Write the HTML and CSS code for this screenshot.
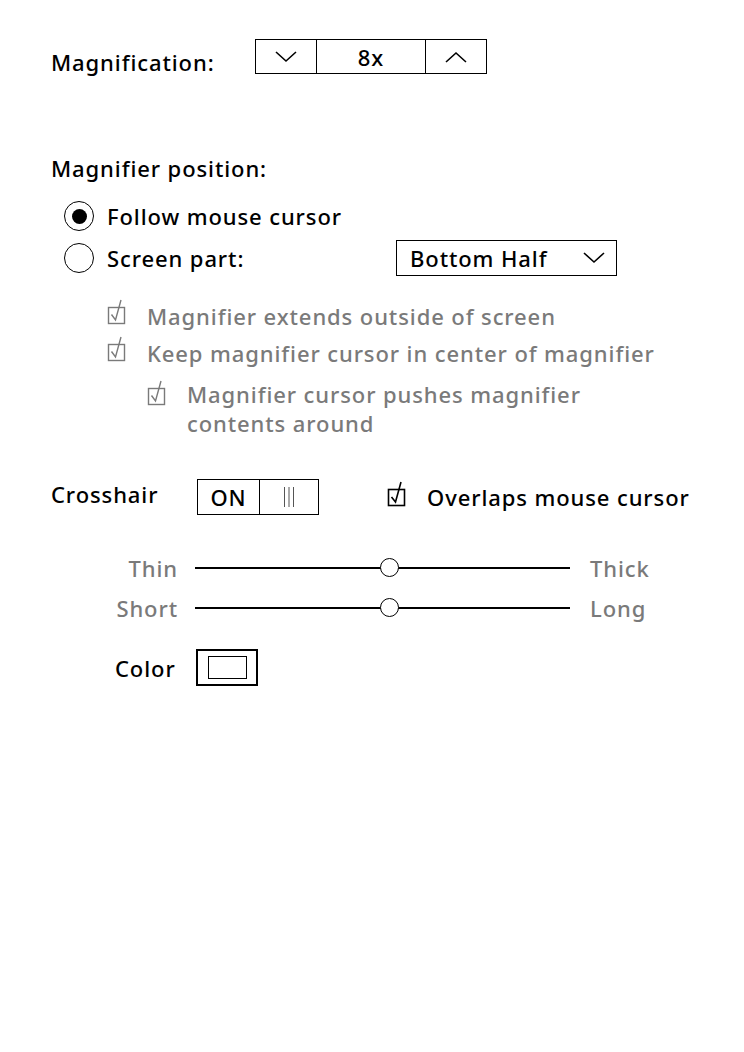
FILE: index.html
```html
<!DOCTYPE html>
<html>
<head>
<meta charset="utf-8">
<link rel="stylesheet" href="styles.css">
</head>
<body>
<div class="page">
  <div class="mag-row">
    <div class="label mag-label">Magnification:</div>
    <div class="spinner">
      <div class="spin-btn"><svg width="24" height="14" viewBox="0 0 24 14"><path d="M2 2 L12 11 L22 2" fill="none" stroke="#000" stroke-width="1.6"/></svg></div>
      <div class="spin-value">8x</div>
      <div class="spin-btn"><svg width="24" height="14" viewBox="0 0 24 14"><path d="M2 12 L12 3 L22 12" fill="none" stroke="#000" stroke-width="1.6"/></svg></div>
    </div>
  </div>

  <div class="section-title">Magnifier position:</div>

  <div class="radios">
    <div class="radio-row">
      <span class="radio checked"><span class="dot"></span></span>
      <span class="label">Follow mouse cursor</span>
    </div>
    <div class="radio-row">
      <span class="radio"></span>
      <span class="label screen-label">Screen part:</span>
      <div class="dropdown">
        <span>Bottom Half</span>
        <svg width="24" height="14" viewBox="0 0 24 14"><path d="M2 2 L12 11 L22 2" fill="none" stroke="#000" stroke-width="1.6"/></svg>
      </div>
    </div>
  </div>

  <div class="checks">
    <div class="check-row">
      <svg class="cb" width="20" height="27" viewBox="0 0 20 27"><rect x="1.5" y="8.5" width="16" height="16" fill="none" stroke="#7a7a7a" stroke-width="1.4"/><path d="M4.5 15.5 L8.5 21 L14 1" fill="none" stroke="#7a7a7a" stroke-width="1.4"/></svg>
      <span class="label gray">Magnifier extends outside of screen</span>
    </div>
    <div class="check-row">
      <svg class="cb" width="20" height="27" viewBox="0 0 20 27"><rect x="1.5" y="8.5" width="16" height="16" fill="none" stroke="#7a7a7a" stroke-width="1.4"/><path d="M4.5 15.5 L8.5 21 L14 1" fill="none" stroke="#7a7a7a" stroke-width="1.4"/></svg>
      <span class="label gray">Keep magnifier cursor in center of magnifier</span>
    </div>
    <div class="check-row sub">
      <svg class="cb" width="20" height="27" viewBox="0 0 20 27"><rect x="1.5" y="8.5" width="16" height="16" fill="none" stroke="#7a7a7a" stroke-width="1.4"/><path d="M4.5 15.5 L8.5 21 L14 1" fill="none" stroke="#7a7a7a" stroke-width="1.4"/></svg>
      <span class="label gray multi">Magnifier cursor pushes magnifier<br>contents around</span>
    </div>
  </div>

  <div class="cross-row">
    <div class="label cross-label">Crosshair</div>
    <div class="toggle">
      <div class="toggle-on">ON</div>
      <div class="toggle-off"><svg width="12" height="20" viewBox="0 0 12 20"><path d="M1.5 0 V20 M6 0 V20 M10.5 0 V20" stroke="#555" stroke-width="1"/></svg></div>
    </div>
    <svg class="cb" width="20" height="27" viewBox="0 0 20 27"><rect x="1.5" y="8.5" width="16" height="16" fill="none" stroke="#000" stroke-width="1.6"/><path d="M4.5 16 L8.5 21 L14 1" fill="none" stroke="#000" stroke-width="1.6"/></svg>
    <span class="label">Overlaps mouse cursor</span>
  </div>

  <div class="sliders">
    <div class="slider-row">
      <span class="s-left gray">Thin</span>
      <div class="track"><span class="knob"></span></div>
      <span class="s-right gray">Thick</span>
    </div>
    <div class="slider-row">
      <span class="s-left gray">Short</span>
      <div class="track"><span class="knob"></span></div>
      <span class="s-right gray">Long</span>
    </div>
  </div>

  <div class="color-row">
    <span class="label color-label">Color</span>
    <div class="swatch"><div class="swatch-inner"></div></div>
  </div>
</div>
</body>
</html>
```

FILE: styles.css
```css
html, body {
  margin: 0;
  padding: 0;
  background: #fff;
}
body {
  font-family: "Noto Sans", "DejaVu Sans", sans-serif;
  font-weight: 500;
  font-size: 22px;
  letter-spacing: 0.9px;
  color: #000;
  width: 744px;
  height: 1052px;
}
.page {
  padding-left: 51px;
  padding-top: 39px;
}
.gray { color: #7a7a7a; }

.mag-row {
  display: flex;
  align-items: center;
  height: 35px;
}
.mag-label { width: 204px; padding-top: 10px; }
.spinner {
  display: flex;
  height: 35px;
  border: 1.5px solid #000;
  box-sizing: border-box;
}
.spin-btn {
  width: 60px;
  display: flex;
  align-items: center;
  justify-content: center;
}
.spin-value {
  width: 108px;
  border-left: 1.5px solid #000;
  border-right: 1.5px solid #000;
  display: flex;
  align-items: center;
  justify-content: center;
}

.section-title {
  margin-top: 79px;
  line-height: 30px;
}

.radios { margin-top: 12px; padding-left: 13px; }
.radio-row {
  display: flex;
  align-items: center;
  height: 42px;
}
.radio {
  width: 30px;
  height: 30px;
  border: 1.8px solid #000;
  border-radius: 50%;
  box-sizing: border-box;
  margin-right: 13px;
  display: flex;
  align-items: center;
  justify-content: center;
  flex: none;
}
.dot {
  width: 15px;
  height: 15px;
  border-radius: 50%;
  background: #000;
}
.screen-label { width: 289px; }
.dropdown {
  width: 221px;
  height: 36px;
  border: 1.5px solid #000;
  box-sizing: border-box;
  display: flex;
  align-items: center;
  justify-content: space-between;
  padding: 0 10px 0 13px;
}

.checks { margin-top: 18px; padding-left: 56px; }
.check-row {
  display: flex;
  align-items: center;
  height: 37px;
}
.check-row.sub {
  margin-top: 9px;
  padding-left: 40px;
  height: auto;
  align-items: flex-start;
}
.cb {
  flex: none;
  margin-right: 20px;
  margin-top: -6px;
}
.check-row.sub .cb { margin-top: 0; }
.multi { line-height: 29px; }

.cross-row {
  margin-top: 41px;
  display: flex;
  align-items: center;
  height: 36px;
}
.cross-label { width: 146px; align-self: flex-start; line-height: 30px; }
.toggle {
  display: flex;
  width: 122px;
  height: 36px;
  border: 1.5px solid #000;
  box-sizing: border-box;
  margin-right: 68px;
}
.toggle-on {
  width: 61px;
  border-right: 1.5px solid #000;
  display: flex;
  align-items: center;
  justify-content: center;
}
.toggle-off {
  flex: 1;
  display: flex;
  align-items: center;
  justify-content: center;
}

.sliders { margin-top: 33px; }
.slider-row {
  display: flex;
  align-items: center;
  height: 40px;
}
.s-left {
  width: 127px;
  text-align: right;
  margin-right: 17px;
}
.track {
  width: 375px;
  height: 1.5px;
  background: #000;
  position: relative;
  margin-right: 20px;
}
.knob {
  position: absolute;
  left: 185px;
  top: -9px;
  width: 19px;
  height: 19px;
  border: 1.8px solid #000;
  border-radius: 50%;
  background: #fff;
  box-sizing: border-box;
}

.color-row {
  margin-top: 21px;
  display: flex;
  align-items: center;
  height: 37px;
  padding-left: 64px;
}
.color-label { width: 81px; }
.swatch {
  width: 62px;
  height: 37px;
  border: 2px solid #000;
  box-sizing: border-box;
  display: flex;
  align-items: center;
  justify-content: center;
}
.swatch-inner {
  width: 39px;
  height: 23px;
  border: 1.8px solid #000;
  box-sizing: border-box;
}
```
